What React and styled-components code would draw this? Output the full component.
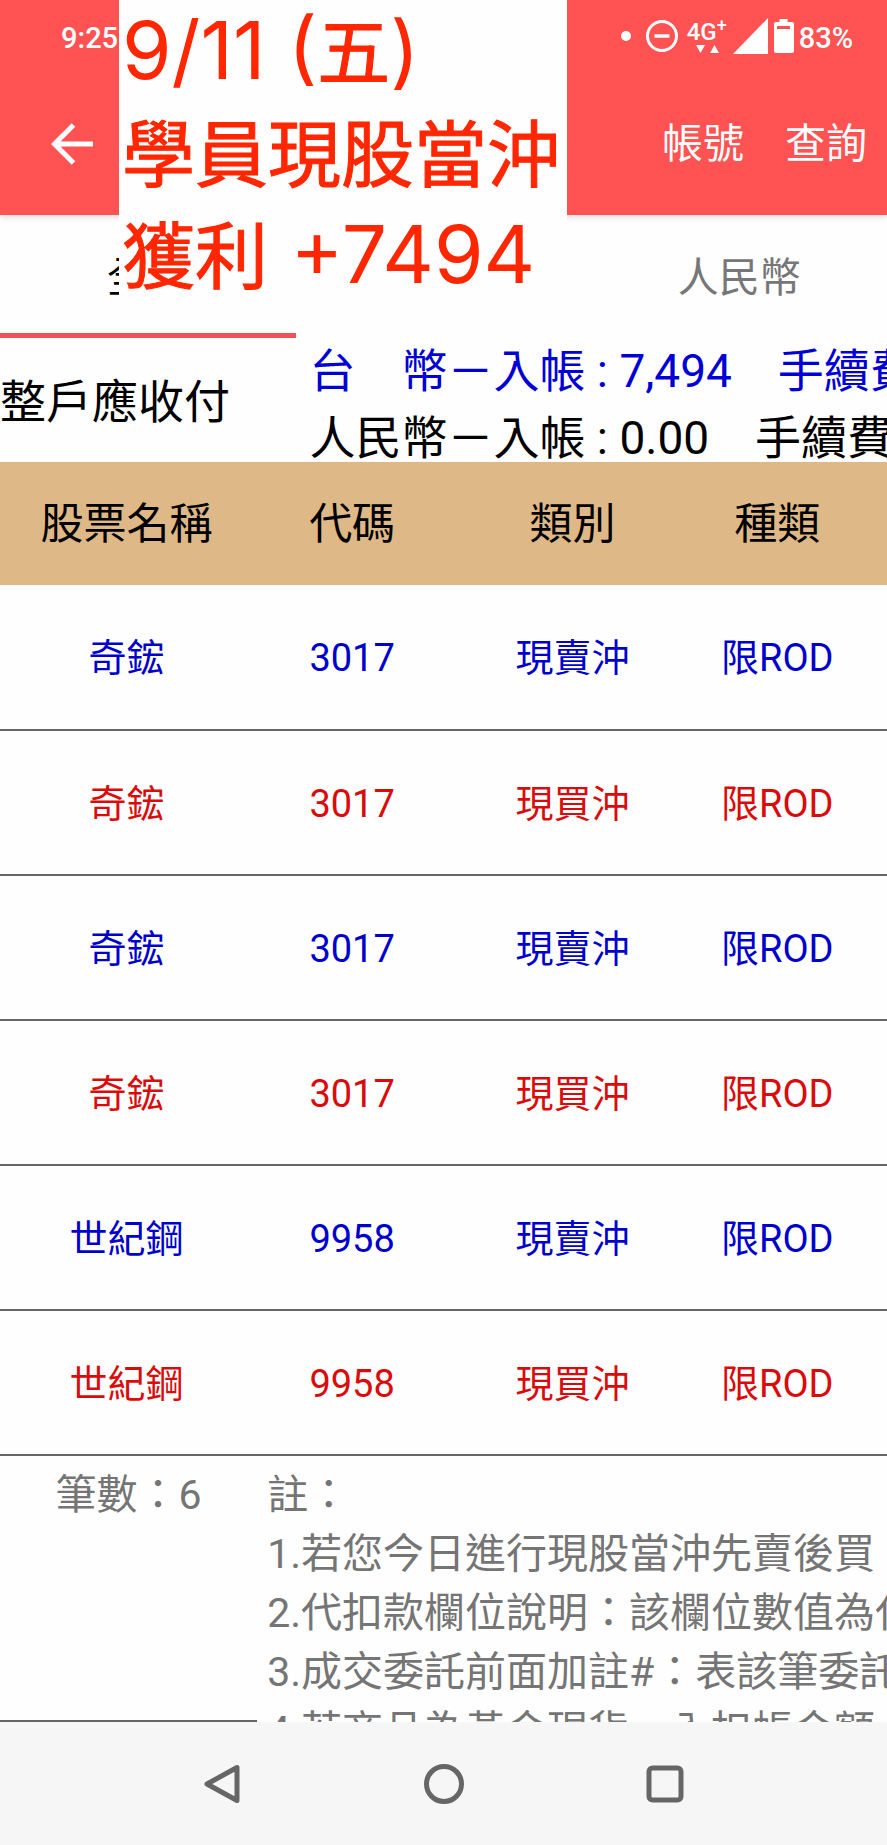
import React from 'react'
import styled, { createGlobalStyle } from 'styled-components'


const orders = [
    { name: '奇鋐', code: '3017', type: '現賣沖', kind: '限ROD', side: 'sell' },
    { name: '奇鋐', code: '3017', type: '現買沖', kind: '限ROD', side: 'buy' },
    { name: '奇鋐', code: '3017', type: '現賣沖', kind: '限ROD', side: 'sell' },
    { name: '奇鋐', code: '3017', type: '現買沖', kind: '限ROD', side: 'buy' },
    { name: '世紀鋼', code: '9958', type: '現賣沖', kind: '限ROD', side: 'sell' },
    { name: '世紀鋼', code: '9958', type: '現買沖', kind: '限ROD', side: 'buy' },
]

const notes = [
    '註：',
    '1.若您今日進行現股當沖先賣後買，',
    '2.代扣款欄位說明：該欄位數值為代',
    '3.成交委託前面加註#：表該筆委託',
    '4.若商品為黃金現貨，入扣帳金額',
]

const tabs = ['全部', '台幣', '人民幣']


function StatusIcons() {
    return (
        <StatusRight>
            <svg width="10" height="10" viewBox="0 0 10 10" fill="#fff">
                <circle cx="5" cy="5" r="5" />
            </svg>
            <svg width="32" height="32" viewBox="0 0 32 32" fill="none" stroke="#fff" strokeWidth="3">
                <circle cx="16" cy="16" r="14.5" />
                <path d="M8.5 16h15" strokeWidth="3.5" />
            </svg>
            <Network>
                <span>4G<sup>+</sup></span>
                <svg width="24" height="8" viewBox="0 0 24 8" fill="#fff">
                    <path d="M1 0h9l-4.500 8zM15 8h9l-4.500 -8z" />
                </svg>
            </Network>
            <svg width="60" height="36" viewBox="0 0 60 36" fill="#fff">
                <path d="M35 0v36H0z" />
                <path
                    fillRule="evenodd"
                    d="M46.500 1h8v3h4.500a2 2 0 0 1 2 2v27a2 2 0 0 1 -2 2H43a2 2 0 0 1 -2 -2V6a2 2 0 0 1 2 -2h3.500zM44 8v3h13V8z"
                />
            </svg>
            <StatusText>83%</StatusText>
        </StatusRight>
    )
}


export default function App() {

    const [tab, setTab] = React.useState(0)

    return (
        <Screen>
            <GlobalStyle />

            <Header>
                <StatusBar>
                    <StatusText>9:25</StatusText>
                    <StatusIcons />
                </StatusBar>
                <Toolbar>
                    <IconButton aria-label="返回">
                        <svg width="42" height="42" viewBox="0 0 42 42" fill="none" stroke="#fff" strokeWidth="5">
                            <path d="M42 21H4M22.500 2L3.500 21l19 19" />
                        </svg>
                    </IconButton>
                    <Actions>
                        <TextButton>帳號</TextButton>
                        <TextButton>查詢</TextButton>
                    </Actions>
                </Toolbar>
            </Header>

            <Tabs>
                {tabs.map((t, i) => (
                    <Tab key={t} $active={i === tab} onClick={() => setTab(i)}>{t}</Tab>
                ))}
            </Tabs>

            <Summary>
                <SummaryLabel>整戶應收付</SummaryLabel>
                <div>
                    <SummaryLine $color="#0000d6">台　幣－入帳 : 7,494　手續費</SummaryLine>
                    <SummaryLine $color="#000">人民幣－入帳 : 0.00　手續費</SummaryLine>
                </div>
            </Summary>

            <Table>
                <thead>
                    <tr>
                        <Th $width="28.5%">股票名稱</Th>
                        <Th $width="22.4%">代碼</Th>
                        <Th $width="27.3%">類別</Th>
                        <Th>種類</Th>
                    </tr>
                </thead>
                <tbody>
                    {orders.map((o, i) => (
                        <Row key={i} $side={o.side}>
                            <td>{o.name}</td>
                            <td>{o.code}</td>
                            <td>{o.type}</td>
                            <td>{o.kind}</td>
                        </Row>
                    ))}
                </tbody>
            </Table>

            <Footnotes>
                <Count>筆數：{orders.length}</Count>
                <Notes>
                    {notes.map((n) => <p key={n}>{n}</p>)}
                </Notes>
            </Footnotes>

            <NavBar>
                <IconButton aria-label="上一頁">
                    <svg width="40" height="40" viewBox="0 0 40 40" fill="none" stroke="#666" strokeWidth="5" strokeLinejoin="round">
                        <path d="M35 3.500v33L5 20z" />
                    </svg>
                </IconButton>
                <IconButton aria-label="首頁">
                    <svg width="40" height="40" viewBox="0 0 40 40" fill="none" stroke="#666" strokeWidth="5">
                        <circle cx="20" cy="20" r="17.500" />
                    </svg>
                </IconButton>
                <IconButton aria-label="最近使用">
                    <svg width="40" height="40" viewBox="0 0 40 40" fill="none" stroke="#666" strokeWidth="5">
                        <rect x="4" y="4" width="32" height="32" rx="3.500" />
                    </svg>
                </IconButton>
            </NavBar>

            <Sticker>
                <p><b>9/11 (</b>五<b>)</b></p>
                <p>學員現股當沖</p>
                <p>獲利<b> +7494</b></p>
            </Sticker>
        </Screen>
    )
}


const GlobalStyle = createGlobalStyle`
    * {
        box-sizing: border-box;
    }
    body {
        margin: 0;
        background: #fefefe;
    }
    p {
        margin: 0;
    }
    button {
        padding: 0;
        border: none;
        background: none;
        font-family: inherit;
        cursor: pointer;
    }
    svg {
        display: block;
    }
`;

const Screen = styled.div`
    position: relative;
    height: 100vh;
    display: flex;
    flex-direction: column;
    overflow: hidden;
    background: #fefefe;
    font-family: Roboto, 'Noto Sans CJK TC', sans-serif;
    white-space: nowrap;
`;

const Header = styled.header`
    flex: none;
    background: #ff5252;
    color: #fff;
    box-shadow: 0 2px 6px rgba(0, 0, 0, 0.15);
`;

const StatusBar = styled.div`
    height: 72px;
    padding: 0 34px 0 61px;
    display: flex;
    align-items: center;
    justify-content: space-between;
`;

const StatusRight = styled.div`
    display: flex;
    align-items: center;
    svg {
        overflow: visible;
    }
    svg + svg {
        margin-left: 15px;
    }
    svg + span {
        margin-left: 6px;
    }
`;

const StatusText = styled.span`
    padding-top: 3px;
    font-size: 29px;
    font-weight: 500;
`;

const Network = styled.div`
    width: 40px;
    margin: 0 6px 0 9px;
    display: flex;
    flex-direction: column;
    align-items: center;
    font-size: 24px;
    font-weight: 500;
    line-height: 26px;
    sup {
        font-size: 18px;
        line-height: 0;
    }
`;

const Toolbar = styled.div`
    height: 143px;
    padding: 0 20px 0 51px;
    display: flex;
    align-items: center;
    justify-content: space-between;
`;

const IconButton = styled.button`
    display: flex;
    align-items: center;
    justify-content: center;
`;

const Actions = styled.div`
    display: flex;
    gap: 41px;
`;

const TextButton = styled.button`
    font-size: 41px;
    line-height: 60px;
    color: #fff;
`;

const Tabs = styled.nav`
    flex: none;
    height: 123px;
    display: grid;
    grid-template-columns: repeat(3, 1fr);
`;

const Tab = styled.button`
    padding-top: 2px;
    font-size: 41px;
    line-height: 60px;
    color: ${p => p.$active ? '#000' : '#777'};
    box-shadow: ${p => p.$active ? 'inset 0 -5px 0 #ef5358' : 'none'};
`;

const Summary = styled.section`
    flex: none;
    height: 124px;
    display: grid;
    grid-template-columns: 35% 1fr;
    overflow: hidden;
    font-size: 46px;
    line-height: 67px;
`;

const SummaryLabel = styled.div`
    align-self: center;
    padding-bottom: 6px;
`;

const SummaryLine = styled.p`
    margin-left: -1px;
    color: ${p => p.$color};
`;

const Table = styled.table`
    flex: none;
    width: 100%;
    table-layout: fixed;
    border-collapse: collapse;
    text-align: center;
    line-height: 56px;
    th {
        padding: 0;
    }
    td {
        padding: 2px 0 0;
    }
    td:last-child, th:last-child {
        padding-right: 26px;
    }
`;

const Th = styled.th`
    width: ${p => p.$width || 'auto'};
    height: 123px;
    background: #deb887;
    font-size: 43px;
    font-weight: 400;
    color: #000;
`;

const Row = styled.tr`
    height: 145px;
    border-bottom: 2px solid #666;
    font-size: 38px;
    color: ${p => p.$side === 'sell' ? '#0000cd' : '#d90b0b'};
`;

const Footnotes = styled.section`
    flex: 1;
    min-height: 0;
    display: grid;
    grid-template-columns: 29% 1fr;
    overflow: hidden;
    padding-top: 10px;
    font-size: 41px;
    line-height: 59px;
    color: #757575;
`;

const Count = styled.div`
    border-bottom: 2px solid #666;
    text-align: center;
`;

const Notes = styled.div`
    min-height: 0;
    padding-left: 10px;
`;

const NavBar = styled.nav`
    flex: none;
    height: 123px;
    padding: 0 12.5%;
    display: grid;
    grid-template-columns: repeat(3, 1fr);
    background: #f6f6f6;
`;

/* note stuck over the top of the screen */
const Sticker = styled.aside`
    position: absolute;
    top: -4px;
    left: 119px;
    width: 448px;
    height: 314px;
    padding-left: 3px;
    background: #fefefe;
    color: #ff2600;
    font-family: 'Noto Sans CJK TC', sans-serif;
    font-size: 73px;
    line-height: 102px;
    -webkit-text-stroke: 1px #ff2600;
    b {
        font-family: Inter, sans-serif;
        font-size: 80px;
        font-weight: 400;
        line-height: 0;
        white-space: pre;
        -webkit-text-stroke: 0;
    }
`;
